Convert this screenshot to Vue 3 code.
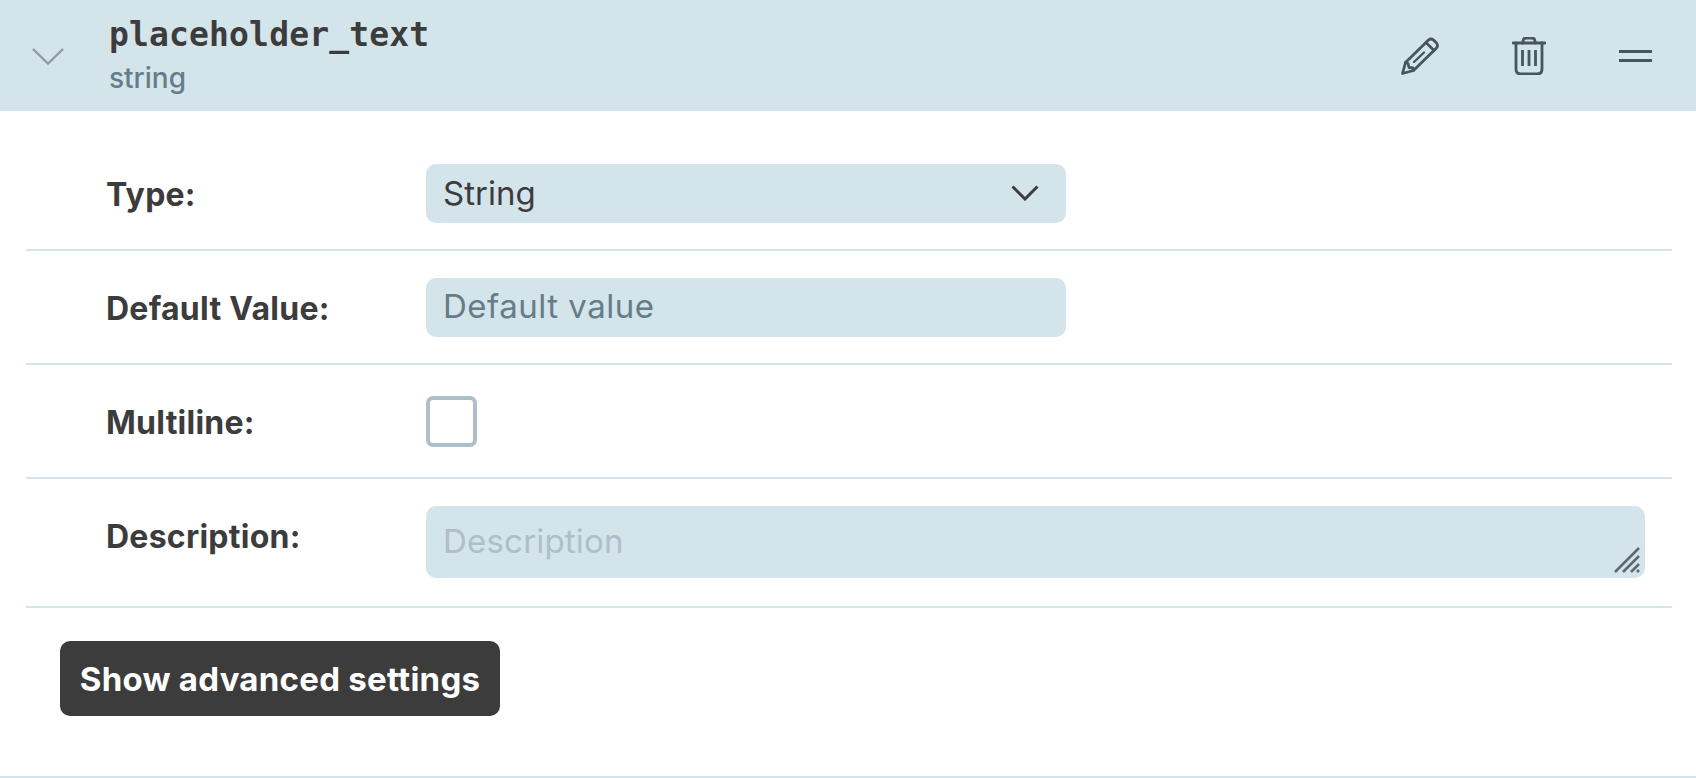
<script setup>
const rows = [
  { label: 'Default Value:', placeholder: 'Default value' },
]
</script>

<template>
  <div class="panel">
    <header class="head">
      <svg class="caret" viewBox="0 0 32 17" width="32" height="17" fill="none">
        <path d="M1 1 L16 15.5 L31 1" stroke="#8f9a9f" stroke-width="2.4" />
      </svg>
      <div class="titles">
        <div class="name">placeholder_text</div>
        <div class="kind">string</div>
      </div>
      <div class="tools">
        <svg class="tool" viewBox="0 0 38 38" width="38" height="38" fill="none" stroke="#47555e" stroke-width="2.8" stroke-linejoin="round" stroke-linecap="round">
          <path d="M1.5 36.5 L4.5 25.5 L27.5 3 Q30 1 32.5 3 L35.5 6 Q37.5 8.5 35.5 11 L12.5 33.5 Z" />
          <path d="M25 5.5 L33 13.5" />
          <path d="M4.5 25.5 L7 26.5 L8 30.5 L12 31 L12.5 33.5" />
          <path d="M13 25 L23 15.5" stroke-width="2.4" />
        </svg>
        <svg class="tool" viewBox="0 0 34 38" width="34" height="38" fill="none" stroke="#47555e" stroke-width="2.8" stroke-linecap="round">
          <path d="M1 6 H33" />
          <path d="M4 6 V32 Q4 37 9 37 H25 Q30 37 30 32 V6" />
          <path d="M10.5 6 L11.5 2.5 Q12 1 14 1 H20 Q22 1 22.5 2.5 L23.5 6" />
          <path d="M10.5 13 V29 M17 13 V29 M23.5 13 V29" stroke-linecap="butt" />
        </svg>
        <svg class="tool" viewBox="0 0 33 12" width="33" height="12" fill="none" stroke="#47555e" stroke-width="2.8">
          <path d="M0 1.5 H33 M0 10.5 H33" />
        </svg>
      </div>
    </header>

    <div class="form">
      <div class="row">
        <label class="label">Type:</label>
        <div class="field select">
          <span>String</span>
          <svg viewBox="0 0 28 16" width="28" height="16" fill="none">
            <path d="M1.5 1.5 L14 14 L26.5 1.5" stroke="#3c3c3c" stroke-width="3" />
          </svg>
        </div>
      </div>
      <div v-for="r in rows" :key="r.label" class="row">
        <label class="label">{{ r.label }}</label>
        <input class="field input" :placeholder="r.placeholder" />
      </div>
      <div class="row">
        <label class="label">Multiline:</label>
        <span class="check"></span>
      </div>
      <div class="row row-top">
        <label class="label label-top">Description:</label>
        <div class="area">
          <textarea class="text" placeholder="Description"></textarea>
          <svg class="grip" viewBox="0 0 26 26" width="26" height="26" fill="none" stroke="#5f6a70" stroke-width="2.6">
            <path d="M1 25 L25 1 M9 25 L25 9 M17 25 L25 17 M23 25 L25 23" />
          </svg>
        </div>
      </div>
    </div>
    <div class="foot">
      <button class="btn">Show advanced settings</button>
    </div>
  </div>
</template>

<style>
html, body { background: #fff; }
</style>

<style scoped>
.panel {
  width: 1696px;
  height: 778px;
  box-sizing: border-box;
  overflow: hidden;
  border-bottom: 2px solid #d4e4eb;
  font-family: Inter, "Noto Sans", sans-serif;
  color: #3c3c3c;
}
.head {
  height: 111px;
  background: #d4e4eb;
  display: flex;
  align-items: flex-start;
  box-sizing: border-box;
  padding-left: 32px;
}
.caret { margin-top: 48px; flex: none; }
.titles { margin-left: 45px; padding-top: 16px; }
.name {
  font-family: "DejaVu Sans Mono", monospace;
  font-weight: 700;
  font-size: 33px;
  letter-spacing: 0.15px;
  line-height: 38px;
  color: #3c3c3c;
}
.kind {
  margin-top: 5px;
  font-size: 28px;
  line-height: 38px;
  font-weight: 500;
  color: #667c88;
}
.tools {
  margin-left: auto;
  height: 111px;
  padding-right: 44px;
  display: flex;
  align-items: center;
  gap: 73px;
}
.form { padding: 0 24px 0 26px; }
.row {
  display: grid;
  grid-template-columns: 400px 1fr;
  align-items: center;
  min-height: 114px;
  box-sizing: border-box;
  border-bottom: 2px solid #d4e4eb;
}
.row:first-child { min-height: 140px; padding-top: 26px; }
.row-top { align-items: start; min-height: 129px; padding-top: 27px; }
.label {
  padding-left: 80px;
  padding-top: 3px;
  font-size: 32px;
  letter-spacing: 0.25px;
  font-weight: 700;
  color: #3c3c3c;
}
.label-top { padding-top: 11px; }
.field {
  width: 640px;
  height: 59px;
  box-sizing: border-box;
  background: #d4e4eb;
  border: 0;
  border-radius: 10px;
  padding: 0 17px;
  font: inherit;
  font-size: 33px;
  color: #3c3c3c;
  outline: none;
}
.select {
  display: flex;
  align-items: center;
  justify-content: space-between;
  padding-right: 27px;
}
.input { letter-spacing: 0.5px; padding-bottom: 2px; }
.input::placeholder { color: #667c88; opacity: 1; }
.check {
  width: 51px;
  height: 51px;
  box-sizing: border-box;
  border: 4px solid #aebfca;
  border-radius: 7px;
}
.area {
  position: relative;
  width: 1219px;
  height: 72px;
}
.text {
  display: block;
  width: 100%;
  height: 100%;
  box-sizing: border-box;
  background: #d4e4eb;
  border: 0;
  border-radius: 10px;
  padding: 15px 17px;
  font: inherit;
  font-size: 33px;
  letter-spacing: 0.2px;
  resize: none;
  outline: none;
}
.text::placeholder { color: #aebfca; opacity: 1; }
.grip { position: absolute; right: 5px; bottom: 5px; }
.foot { padding: 33px 0 0 60px; }
.btn {
  display: block;
  width: 440px;
  height: 75px;
  background: #3c3c3c;
  color: #fff;
  border: 0;
  border-radius: 10px;
  padding: 0;
  font: inherit;
  font-size: 33px;
  letter-spacing: 0.25px;
  font-weight: 700;
}
</style>
